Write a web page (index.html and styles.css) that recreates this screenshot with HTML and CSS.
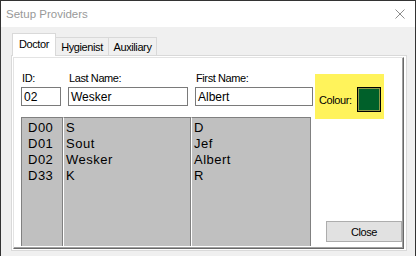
FILE: index.html
```html
<!DOCTYPE html>
<html>
<head>
<meta charset="utf-8">
<link rel="stylesheet" href="styles.css">
</head>
<body>
<div class="window">
  <div class="titlebar">
    <span class="title">Setup Providers</span>
    <svg class="xicon" width="10" height="10" viewBox="0 0 10 10"><path d="M0.5 0.5L9.5 9.5M9.5 0.5L0.5 9.5" stroke="#8c8c8c" stroke-width="1" fill="none"/></svg>
  </div>
  <div class="client">
    <div class="tabs">
      <div class="tab tab-doctor active">Doctor</div>
      <div class="tab tab-hyg">Hygienist</div>
      <div class="tab tab-aux">Auxiliary</div>
    </div>
    <div class="panel">
      <div class="frame">
        <div class="leftcol">
          <div class="fields">
            <div class="field f-id"><div class="label">ID:</div><div class="input">02</div></div>
            <div class="field f-last"><div class="label">Last Name:</div><div class="input">Wesker</div></div>
            <div class="field f-first"><div class="label">First Name:</div><div class="input">Albert</div></div>
          </div>
          <div class="list">
            <div class="col c1"><div>D00</div><div>D01</div><div>D02</div><div>D33</div></div>
            <div class="col c2"><div>S</div><div>Sout</div><div>Wesker</div><div>K</div></div>
            <div class="col c3"><div>D</div><div>Jef</div><div>Albert</div><div>R</div></div>
          </div>
        </div>
        <div class="rightcol">
          <div class="colour"><span class="colour-label">Colour:</span><div class="swatch"></div></div>
          <button class="close">Close</button>
        </div>
      </div>
    </div>
  </div>
</div>
</body>
</html>
```
FILE: styles.css
```css
html, body {
  margin: 0;
  padding: 0;
}
body {
  width: 416px;
  height: 256px;
  overflow: hidden;
  background: #f0f0f0;
}
.window {
  box-sizing: border-box;
  width: 416px;
  height: 256px;
  border: 1px solid #333;
  border-bottom: none;
  background: #f0f0f0;
  font-family: "Liberation Sans", Arial, sans-serif;
  color: #000;
}
.titlebar {
  height: 26px;
  background: #fff;
  display: flex;
  align-items: center;
  justify-content: space-between;
  padding: 0 10px 0 5px;
}
.title {
  font-size: 11.5px;
  color: #999;
}
.xicon {
  display: block;
}
.client {
  padding: 6px 8px 0 10px;
}
.tabs {
  display: flex;
  align-items: flex-end;
  height: 22px;
  padding-left: 1px;
  position: relative;
  z-index: 1;
}
.tab {
  box-sizing: border-box;
  height: 18px;
  border: 1px solid #d9d9d9;
  border-bottom: none;
  font-size: 11px;
  letter-spacing: -0.4px;
  display: flex;
  align-items: center;
  justify-content: center;
  background: #f0f0f0;
}
.tab-doctor { width: 44px; }
.tab-hyg { width: 54px; margin-left: -1px; }
.tab-aux { width: 49px; margin-left: -1px; }
.tab.active {
  height: 23px;
  background: #fff;
  margin-bottom: -1px;
  padding-bottom: 2px;
}
.panel {
  box-sizing: border-box;
  height: 196px;
  border: 1px solid #d9d9d9;
  background: #fff;
  padding: 1px 2px 1px 1px;
}
.frame {
  box-sizing: border-box;
  height: 100%;
  border-top: 1px solid #e3e3e3;
  border-left: 1px solid #e3e3e3;
  border-right: 1px solid #696969;
  border-bottom: 1px solid #696969;
  box-shadow: inset -1px -1px 0 #a0a0a0;
  display: flex;
  padding: 14px 1px 2px 7px;
}
.leftcol {
  width: 292px;
  display: flex;
  flex-direction: column;
}
.fields {
  display: flex;
  gap: 7px;
}
.f-id { width: 40px; }
.f-last { width: 120px; }
.f-first { width: 118px; }
.label {
  height: 13px;
  font-size: 11px;
  line-height: 13px;
  letter-spacing: -0.4px;
  padding-left: 1px;
  margin-bottom: 2px;
  white-space: nowrap;
}
.input {
  box-sizing: border-box;
  height: 19px;
  border: 1px solid #7a7a7a;
  font-size: 12px;
  padding-left: 2px;
  display: flex;
  align-items: center;
}
.list {
  margin-top: 11px;
  flex: 1;
  display: flex;
}
.col {
  box-sizing: border-box;
  background: #c0c0c0;
  border-top: 1px solid #808080;
  border-left: 1px solid #fff;
  border-right: 1px solid #808080;
  font-size: 13px;
  letter-spacing: 0.5px;
  line-height: 16px;
  padding-top: 2px;
  padding-left: 2px;
}
.c1 {
  width: 42px;
  border-left-color: #808080;
  padding-left: 6px;
}
.c2 { width: 128px; }
.c3 { width: 120px; }
.rightcol {
  flex: 1;
  display: flex;
  flex-direction: column;
}
.colour {
  box-sizing: border-box;
  margin: 2px 0 0 2px;
  width: 69px;
  height: 45px;
  background: #fff35b;
  display: flex;
  align-items: center;
  padding: 13px 0 7px 4px;
}
.colour-label {
  font-size: 11px;
  letter-spacing: -0.4px;
}
.swatch {
  box-sizing: border-box;
  width: 24px;
  height: 25px;
  margin-left: auto;
  margin-right: 3px;
  border: 1px solid #000;
  background: #00602a;
  box-shadow: inset 0 0 0 1px #8f9a4a;
}
.close {
  margin-top: auto;
  align-self: flex-end;
  margin-bottom: 4px;
  box-sizing: border-box;
  width: 76px;
  height: 21px;
  background: #e1e1e1;
  border: 1px solid #adadad;
  padding: 0;
  font-family: "Liberation Sans", Arial, sans-serif;
  font-size: 11px;
  letter-spacing: -0.4px;
  color: #000;
}
```
